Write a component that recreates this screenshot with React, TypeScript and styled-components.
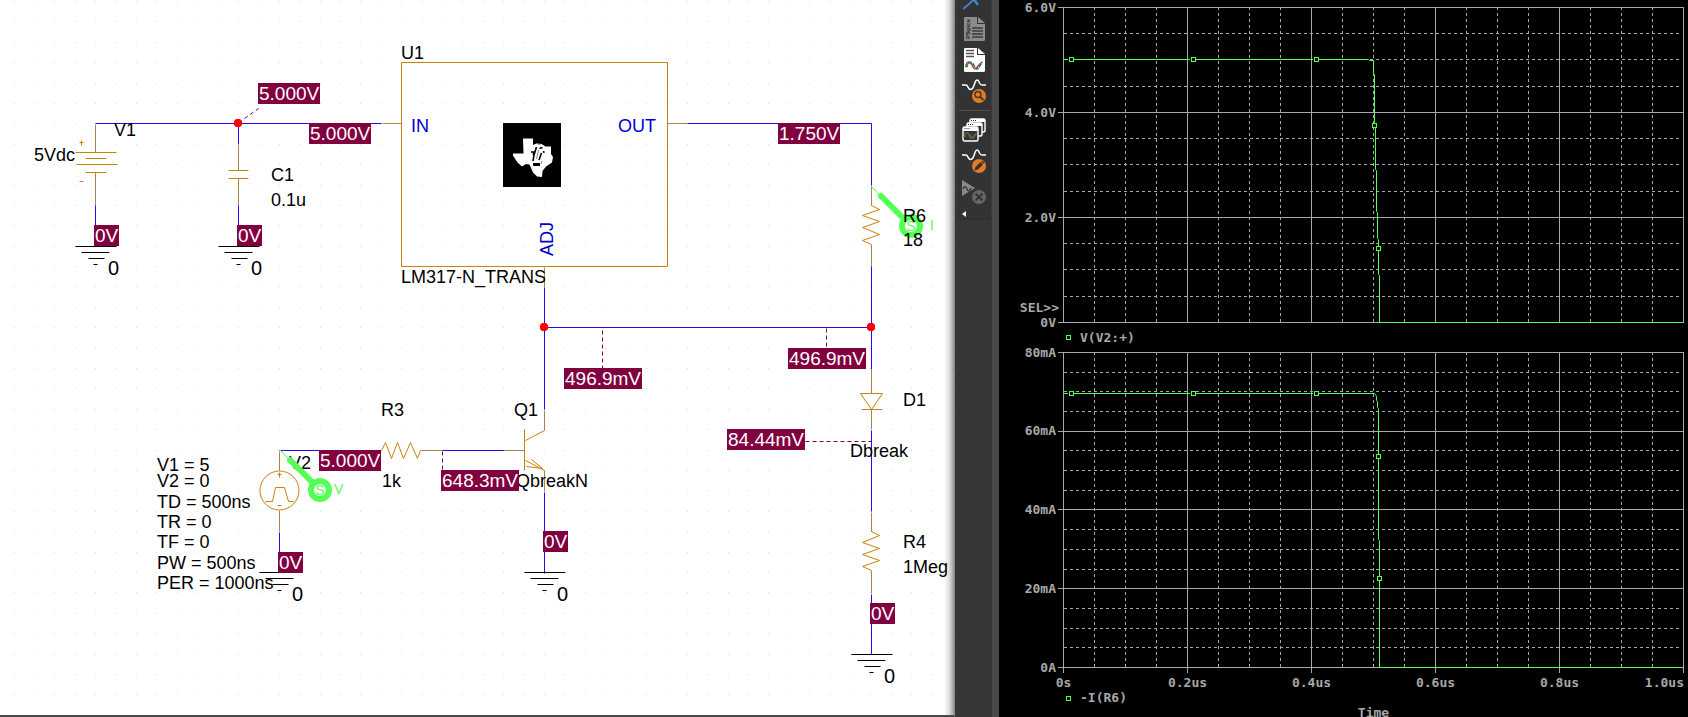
import React from "react";
import styled, { createGlobalStyle, css } from "styled-components";

const GlobalStyle = createGlobalStyle`
  * { box-sizing: border-box; }
  html, body, #root { height: 100%; }
  body { margin: 0; background: #000; overflow: hidden; }
`;

const colors = {
  wire: "#3300ff",
  part: "#c8820a",
  lead: "#a8864a",
  tag: "#800040",
  probe: "#55ff55",
  pin: "#0000cc",
  grid: "#a8a8a8",
  trace: "#55ff55",
};

const Page = styled.main`
  display: grid;
  grid-template-columns: minmax(0, 955fr) 44px minmax(0, 689fr);
  height: 100vh;
  overflow: hidden;
`;

/* ---------- schematic ---------- */

const SchematicPane = styled.section`
  position: relative;
  overflow: hidden;
  background: #fff;
  border-bottom: 2px solid #484848;
  border-right: 1px solid #868686;
  font-family: "Liberation Sans", Arial, sans-serif;

  &::after {
    content: "";
    position: absolute;
    top: 0;
    right: 0;
    bottom: 0;
    width: 10px;
    background: linear-gradient(to right, rgba(0, 0, 0, 0), rgba(0, 0, 0, 0.12) 50%, rgba(0, 0, 0, 0.4));
  }
`;

const Layer = styled.svg`
  position: absolute;
  top: 0;
  left: 0;
  width: 100%;
  height: 100%;
  fill: none;
`;

const place = css<{ $x: number; $y: number }>`
  position: absolute;
  left: ${(p) => p.$x}px;
  top: ${(p) => p.$y}px;
  white-space: pre;
`;

const Label = styled.span<{ $x: number; $y: number; $tone?: string; $big?: boolean }>`
  ${place}
  font-size: ${(p) => (p.$big ? 20 : 18)}px;
  line-height: 20px;
  color: ${(p) => p.$tone || "#000"};
`;

const TurnedLabel = styled(Label)`
  writing-mode: vertical-rl;
  transform: rotate(180deg);
`;

const VoltageTag = styled.span<{ $x: number; $y: number }>`
  ${place}
  height: 21px;
  padding: 0 1px;
  font-size: 19px;
  line-height: 21px;
  color: #fff;
  background: ${colors.tag};
`;

type Item = [string, number, number];

const partLabels: Item[] = [
  ["V1", 114, 120],
  ["5Vdc", 34, 145],
  ["C1", 271, 165],
  ["0.1u", 271, 190],
  ["U1", 401, 43],
  ["LM317-N_TRANS", 401, 267],
  ["Q1", 514, 400],
  ["QbreakN", 516, 471],
  ["R3", 381, 400],
  ["1k", 382, 471],
  ["V2", 289, 453],
  ["V1 = 5", 157, 455],
  ["V2 = 0", 157, 471],
  ["TD = 500ns", 157, 492],
  ["TR = 0", 157, 512],
  ["TF = 0", 157, 532],
  ["PW = 500ns", 157, 553],
  ["PER = 1000ns", 157, 573],
  ["D1", 903, 390],
  ["Dbreak", 850, 441],
  ["R4", 903, 532],
  ["1Meg", 903, 557],
];

const grounds: [number, number][] = [
  [95, 246],
  [238, 246],
  [279, 572],
  [544, 572],
  [871, 654],
];

const frontLabels: Item[] = [
  ["R6", 903, 206],
  ["18", 903, 230],
];

const tags: Item[] = [
  ["5.000V", 258, 83],
  ["5.000V", 309, 123],
  ["0V", 94, 225],
  ["0V", 237, 225],
  ["1.750V", 778, 123],
  ["496.9mV", 564, 368],
  ["496.9mV", 788, 348],
  ["84.44mV", 727, 429],
  ["5.000V", 319, 450],
  ["648.3mV", 441, 470],
  ["0V", 543, 531],
  ["0V", 870, 603],
  ["0V", 278, 552],
];

const dots = (() => {
  let d = "";
  for (let i = 0; i < 130; i++)
    for (let j = 0; j < 70; j++)
      d += `M${Math.floor(14 + 20.4 * i)} ${Math.floor(1.4 + 20.4 * j)}h1v1h-1z`;
  return d;
})();

/* A run of straight segments along pixel centres. */
const run = (...pts: [number, number][]) =>
  "M" + pts.map(([x, y]) => `${x + 0.5} ${y + 0.5}`).join("L");

const wires = [
  run([95, 123], [381, 123]),
  run([95, 205], [95, 246]),
  run([238, 123], [238, 144]),
  run([238, 205], [238, 246]),
  run([687, 123], [871, 123], [871, 185]),
  run([871, 266], [871, 369]),
  run([544, 327], [871, 327]),
  run([544, 287], [544, 409]),
  run([442, 450], [504, 450]),
  run([544, 492], [544, 573]),
  run([279, 450], [319, 450]),
  run([279, 532], [279, 572]),
  run([871, 430], [871, 511]),
  run([871, 594], [871, 654]),
].join("");

const leads = [
  run([95, 124], [95, 152]),
  run([95, 172], [95, 205]),
  run([238, 145], [238, 170]),
  run([238, 178], [238, 205]),
  run([382, 123], [401, 123]),
  run([667, 123], [687, 123]),
  run([871, 186], [871, 205]),
  run([871, 244], [871, 266]),
  run([544, 267], [544, 287]),
  run([544, 410], [544, 430]),
  run([504, 450], [524, 450]),
  run([544, 470], [544, 491]),
  run([420, 450], [442, 450]),
  run([279, 451], [279, 470]),
  run([279, 510], [279, 531]),
  run([871, 369], [871, 393]),
  run([871, 409], [871, 429]),
  run([871, 512], [871, 531]),
  run([871, 570], [871, 593]),
].join("");

const parts = [
  // battery
  run([75, 152], [116, 152]),
  run([85, 158], [106, 158]),
  run([76, 164], [117, 164]),
  run([85, 172], [106, 172]),
  run([79, 142], [83, 142]),
  run([81, 140], [81, 145]),
  run([79, 181], [83, 181]),
  // capacitor
  run([228, 170], [248, 170]),
  run([228, 178], [248, 178]),
  // regulator body
  run([401, 62], [667, 62], [667, 266], [401, 266], [401, 62]),
  // resistors
  run([871, 205], [879, 209], [862, 215], [879, 221], [862, 227], [879, 234], [862, 240], [871, 244]),
  run([871, 531], [879, 535], [862, 542], [879, 548], [862, 554], [879, 560], [862, 566], [871, 570]),
  run([381, 450], [385, 442], [391, 458], [397, 442], [403, 458], [410, 442], [417, 458], [420, 450]),
  // transistor
  run([524, 429], [524, 470]),
  run([525, 440], [544, 430]),
  run([525, 460], [544, 470]),
  run([531, 459], [542, 468], [526, 466]),
  // diode
  run([860, 393], [882, 393], [871, 409], [860, 393]),
  run([861, 409], [882, 409]),
  // pulse source
  run([265, 501], [272, 501], [275, 487], [284, 487], [288, 501], [293, 501]),
  run([277, 474], [281, 474]),
  run([279, 472], [279, 477]),
  run([277, 505], [281, 505]),
].join("");

const groundBars = grounds
  .map(([x, y]) =>
    [
      run([x - 20, y], [x + 21, y]),
      run([x - 14, y + 6], [x + 14, y + 6]),
      run([x - 7, y + 12], [x + 9, y + 12]),
      run([x - 2, y + 18], [x + 2, y + 18]),
    ].join(""),
  )
  .join("");

const tagLeaders = [
  run([244, 118], [258, 108]),
  run([602, 330], [602, 368]),
  run([826, 328], [826, 348]),
  run([805, 441], [871, 441]),
  run([442, 451], [442, 470]),
].join("");

const Junction = ({ x, y }: { x: number; y: number }) => (
  <path fill="#ff0000" d={`M${x - 2} ${y - 4}h4l2 2v4l-2 2h-4l-2-2v-4z`} />
);

const MakerLogo = () => (
  <g>
    <rect x="503" y="123" width="58" height="64" fill="#000" />
    <path
      fill="#fff"
      d="M523 138.500h10v6.500l3.500-1.500 5 .5 4 2.500h5.500v7.500l2 3-1 5.500-6 4-3.500 4.500-.5 6-5-.5-4-4-3.500-8-3.500-.5-4 2.500-4.500-4-4.500-7v-2h10.500z"
    />
    <path
      stroke="#000"
      strokeWidth="1.600"
      d="M531 152h2.500v3M536.500 147l-2.500 8-1 6M541.500 153l-2.500 7M543 151.500l1.500 1M539.500 148.500l3-1"
    />
    <path stroke="#000" strokeWidth="3" d="M533 164.500h7" />
    <path stroke="#888" d="M537.500 144l3 1M538.500 150l-2 9M542 161l-1 3" />
  </g>
);

const ProbeMark = ({ x, y, kind, gap }: { x: number; y: number; kind: string; gap: number }) => (
  <g stroke={colors.probe}>
    <path d={`M${x} ${y}l9 9`} />
    <path strokeWidth="6" strokeLinecap="round" d={`M${x + 10} ${y + 10}l23 23`} />
    <circle cx={x + 40} cy={y + 40} r="9" strokeWidth="6" fill="#fff" />
    <g fill={colors.probe} stroke="none" fontSize="14">
      <text x={x + 40} y={y + 45} textAnchor="middle">S</text>
      <text x={x + gap} y={y + 44}>{kind}</text>
    </g>
  </g>
);

const Schematic = () => (
  <SchematicPane aria-label="Schematic">
    <Layer>
      <path d={dots} fill="#bfe4f2" shapeRendering="crispEdges" />
      <path d={leads} stroke={colors.lead} />
      <path d={parts} stroke={colors.part} />
      <circle cx="279.500" cy="490.500" r="19.500" stroke={colors.part} />
      <path d={wires} stroke={colors.wire} />
      <path d={groundBars} stroke="#000" />
      <path d={tagLeaders} stroke={colors.tag} strokeDasharray="4 3" />
      <Junction x={238} y={123} />
      <Junction x={544} y={327} />
      <Junction x={871} y={327} />
      <MakerLogo />
    </Layer>
    {partLabels.map(([text, x, y]) => (
      <Label key={text + y} $x={x} $y={y}>{text}</Label>
    ))}
    {grounds.map(([x, y]) => (
      <Label key={`${x}-${y}`} $x={x + 13} $y={y + 12} $big>0</Label>
    ))}
    <Label $x={411} $y={116} $tone={colors.pin}>IN</Label>
    <Label $x={618} $y={116} $tone={colors.pin}>OUT</Label>
    <TurnedLabel $x={537} $y={222} $tone={colors.pin}>ADJ</TurnedLabel>
    <Layer>
      <ProbeMark x={280} y={450} kind="V" gap={54} />
      <ProbeMark x={871} y={186} kind="I" gap={59} />
    </Layer>
    {frontLabels.map(([text, x, y]) => (
      <Label key={text} $x={x} $y={y}>{text}</Label>
    ))}
    {tags.map(([text, x, y]) => (
      <VoltageTag key={`${x}-${y}`} $x={x} $y={y}>{text}</VoltageTag>
    ))}
  </SchematicPane>
);

/* ---------- toolbar ---------- */

const Toolbar = styled.nav`
  padding: 0 0 0 3px;
  background: #373737;
  border-right: 7px solid #4a4a4a;
  overflow: hidden;
`;

const ToolGroup = styled.div`
  display: flex;
  flex-direction: column;
  align-items: center;
  gap: 7px;
  width: 32px;
  height: 220px;
  background: #333;
  border: solid #2e2e2e;
  border-width: 0 1px 1px;
  border-radius: 0 0 3px 3px;
`;

const ToolButton = styled.button<{ $cut?: boolean }>`
  display: flex;
  align-items: flex-end;
  flex: none;
  width: 24px;
  height: ${(p) => (p.$cut ? 10 : 24)}px;
  padding: 0;
  border: 0;
  background: none;
  overflow: hidden;
`;

const Glyph = styled.svg.attrs({ viewBox: "0 0 24 24" })`
  flex: none;
  width: 24px;
  height: 24px;
  fill: none;
`;

const Divider = styled.hr`
  flex: none;
  width: 31px;
  height: 1px;
  margin: 0;
  border: 0;
  background: #505050;
`;

const MoreButton = styled.button`
  align-self: flex-start;
  display: flex;
  padding: 0 0 0 3px;
  border: 0;
  background: none;
`;

const Wave = () => (
  <path stroke="#fff" strokeWidth="1.500" d="M0 6h4c2 0 2 4.500 4.500 4.500s3-3 4-5.500 1-4 2.500-4 1.500 1 2.500 3 1 2 2.500 2h4" />
);

const MiniWaves = () => (
  <g strokeWidth="1.600">
    <path stroke="#d8344a" d="M3 4.500c1-4.500 4.500-4.500 6-.5s3.500 5.500 6 1l4-4" />
    <path stroke="#12864a" d="M2 5.500h2c1.500-5.500 5-5 7-1s4 5 6 0l2-3.500" strokeDasharray="4 1" />
  </g>
);

const Tools = () => (
  <Toolbar aria-label="Simulation tools">
    <ToolGroup>
      <ToolButton $cut aria-label="Marker">
        <Glyph>
          <path stroke="#3f83c6" strokeWidth="2" d="M1 23l6-5 5-5 4 5M9 11l7 8" />
        </Glyph>
      </ToolButton>
      <ToolButton aria-label="View netlist">
        <Glyph>
          <path fill="#8c8c8c" d="M3 0h12v7h8v15.500q0 1.500-1.500 1.500H3q-1 0-1-1.500v-21Q2 0 3 0zM16 0l7 6h-7z" />
          <path stroke="#3a3a3a" strokeWidth="1.500" d="M10 11h11M10 14h11M10 17h11M10 20h11" />
          <text transform="translate(8 22) rotate(-90)" fontSize="6" fontWeight="700" fontFamily="Liberation Sans, sans-serif" fill="#1c1c1c">PSpice</text>
        </Glyph>
      </ToolButton>
      <ToolButton aria-label="View output">
        <Glyph>
          <path fill="#fff" d="M3 0h12v7h8v15.500q0 1.500-1.500 1.500H3q-1 0-1-1.500v-21Q2 0 3 0zM16 0l7 6h-7z" />
          <path stroke="#555" strokeWidth="1.300" d="M4 2.500h8M4 5.500h8M4 8.500h8" />
          <g transform="translate(1 13)"><MiniWaves /></g>
        </Glyph>
      </ToolButton>
      <ToolButton aria-label="View results">
        <Glyph>
          <Wave />
          <circle cx="17" cy="17" r="7" fill="#dd7d2c" />
          <circle cx="16" cy="15.500" r="3" stroke="#4a3420" strokeWidth="1.400" />
          <path stroke="#4a3420" strokeWidth="1.800" d="M18.300 18l3 3" />
        </Glyph>
      </ToolButton>
      <Divider />
      <ToolButton aria-label="Plot windows">
        <Glyph>
          <g fill="#333" stroke="#fff" strokeWidth="1.400">
            <rect x="8" y="1" width="15" height="13" rx="1.500" />
            <rect x="5" y="5" width="15" height="13" rx="1.500" />
            <rect x="1" y="9" width="15" height="14" rx="1.500" />
          </g>
          <path fill="#fff" d="M8 1h15v3H8zM5 5h15v3H5zM1 9h15v4H1z" />
          <path stroke="#333" strokeDasharray="1 1" d="M9 2.500h5M6 6.500h5M2.500 10.500h5" />
          <g transform="translate(0 14) scale(.78)"><MiniWaves /></g>
        </Glyph>
      </ToolButton>
      <ToolButton aria-label="Edit profile">
        <Glyph>
          <Wave />
          <circle cx="17" cy="17" r="7" fill="#dd7d2c" />
          <path fill="#46301c" d="M12.500 21.500l1-3.500 5-5 2.500 2.500-5 5zM19.200 12.300l1-.9 2.400 2.400-1 1z" />
        </Glyph>
      </ToolButton>
      <ToolButton aria-label="Settings">
        <Glyph>
          <path fill="#8a8a8a" d="M0 0l13 8-13 8z" />
          <path stroke="#333" strokeWidth="1.300" d="M1 9c1-3 3-3 4 0s3 2 4-1" />
          <circle cx="17" cy="17" r="7" fill="#666" />
          <path stroke="#333" strokeWidth="1.800" d="M13.500 13.500l7 7M20.500 13.500l-7 7" />
        </Glyph>
      </ToolButton>
      <MoreButton aria-label="More">
        <svg width="4" height="6" viewBox="0 0 4 6"><path d="M4 0v6L0 3z" fill="#fff" /></svg>
      </MoreButton>
    </ToolGroup>
  </Toolbar>
);

/* ---------- waveform plots ---------- */

const PlotPane = styled.section`
  padding: 7px 4px 0 0;
  overflow: hidden;
  background: #000;
  color: ${colors.grid};
  font: bold 13px/14px "DejaVu Sans Mono", monospace;
`;

const ChartRow = styled.div`
  display: flex;
  height: 316px;
`;

const YAxis = styled.div`
  position: relative;
  display: flex;
  flex: 0 0 64px;
  flex-direction: column;
  justify-content: space-between;
  padding-right: 7px;
`;

const YLabel = styled.span`
  display: flex;
  align-items: center;
  justify-content: flex-end;
  height: 1px;
`;

const Selected = styled.span`
  position: absolute;
  right: 4px;
  bottom: 8px;
`;

const Graph = styled.svg`
  display: block;
  flex: 1;
  min-width: 0;
  height: 316px;
  overflow: visible;
  fill: none;
`;

const Legend = styled.div<{ $tall?: boolean }>`
  display: flex;
  align-items: center;
  gap: 9px;
  height: ${(p) => (p.$tall ? 29 : 16)}px;
  padding-left: 67px;
`;

const LegendMark = styled.i`
  width: 5px;
  height: 5px;
  border: 1px solid ${colors.trace};
`;

const XAxis = styled.div`
  display: flex;
  justify-content: space-between;
  padding: 8px 0 0 64px;
`;

const XLabel = styled.span<{ $end?: boolean }>`
  display: flex;
  justify-content: ${(p) => (p.$end ? "flex-end" : "center")};
  width: 1px;
  white-space: nowrap;
`;

const AxisTitle = styled.div`
  padding-left: 64px;
  text-align: center;
`;

type Point = [number, number];

interface PlotProps {
  title: string;
  labels: string[];
  rows: number;
  trace: Point[];
  marks: Point[];
  selected?: boolean;
  timeTicks?: boolean;
}

const Plot = ({ title, labels, rows, trace, marks, selected, timeTicks }: PlotProps) => {
  const majors = labels.length - 1;
  const every = rows / majors;
  let solid = "";
  let dashed = "";
  for (let r = 0; r <= rows; r++) {
    const y = Math.ceil((315 * r) / rows - 0.5);
    if (r % every === 0) solid += `M-5 ${y + 0.5}H621`;
    else dashed += `M1 ${y + 0.5}H617`;
  }
  for (let c = 0; c <= 20; c++) {
    const x = c * 31 + 0.5;
    if (c % 4 === 0) solid += `M${x} 0V${timeTicks ? 321 : 316}`;
    else dashed += `M${x} 0V315`;
  }
  return (
    <ChartRow>
      <YAxis>
        {labels.map((l) => (
          <YLabel key={l}>{l}</YLabel>
        ))}
        {selected && <Selected>SEL&gt;&gt;</Selected>}
      </YAxis>
      <Graph viewBox="0 0 621 316" preserveAspectRatio="none" role="img" aria-label={title}>
        <path d={dashed} stroke={colors.grid} strokeDasharray="3 3" />
        <path d={solid} stroke={colors.grid} />
        <path d={run(...trace)} stroke={colors.trace} />
        {marks.map(([x, y]) => (
          <g key={`${x}-${y}`}>
            <rect x={x - 3} y={y - 2} width="6" height="5" fill="#000" />
            <rect x={x - 1.5} y={y - 1.5} width="4" height="4" stroke={colors.trace} />
          </g>
        ))}
      </Graph>
    </ChartRow>
  );
};

const voltage: Point[] = [
  [0, 52], [305, 52], [306, 53], [310, 53], [310, 66], [311, 67], [311, 115], [312, 116], [312, 162],
  [313, 163], [313, 204], [314, 205], [314, 231], [315, 232], [315, 267], [316, 268], [316, 315], [620, 315],
];

const current: Point[] = [
  [0, 41], [311, 41], [312, 42], [313, 44], [313, 48], [314, 49], [314, 55], [315, 56], [315, 187],
  [316, 188], [316, 315], [620, 315],
];

const times = ["0s", "0.2us", "0.4us", "0.6us", "0.8us", "1.0us"];

const Plots = () => (
  <PlotPane aria-label="Waveforms">
    <Plot
      title="V(V2:+)"
      labels={["6.0V", "4.0V", "2.0V", "0V"]}
      rows={12}
      trace={voltage}
      marks={[[8, 52], [130, 52], [253, 52], [311, 118], [315, 241]]}
      selected
    />
    <Legend $tall>
      <LegendMark />
      V(V2:+)
    </Legend>
    <Plot
      title="-I(R6)"
      labels={["80mA", "60mA", "40mA", "20mA", "0A"]}
      rows={16}
      trace={current}
      marks={[[8, 41], [130, 41], [253, 41], [315, 104], [316, 226]]}
      timeTicks
    />
    <XAxis>
      {times.map((t, i) => (
        <XLabel key={t} $end={i === times.length - 1}>{t}</XLabel>
      ))}
    </XAxis>
    <Legend>
      <LegendMark />
      -I(R6)
    </Legend>
    <AxisTitle>Time</AxisTitle>
  </PlotPane>
);

export default function App() {
  return (
    <>
      <GlobalStyle />
      <Page>
        <Schematic />
        <Tools />
        <Plots />
      </Page>
    </>
  );
}
